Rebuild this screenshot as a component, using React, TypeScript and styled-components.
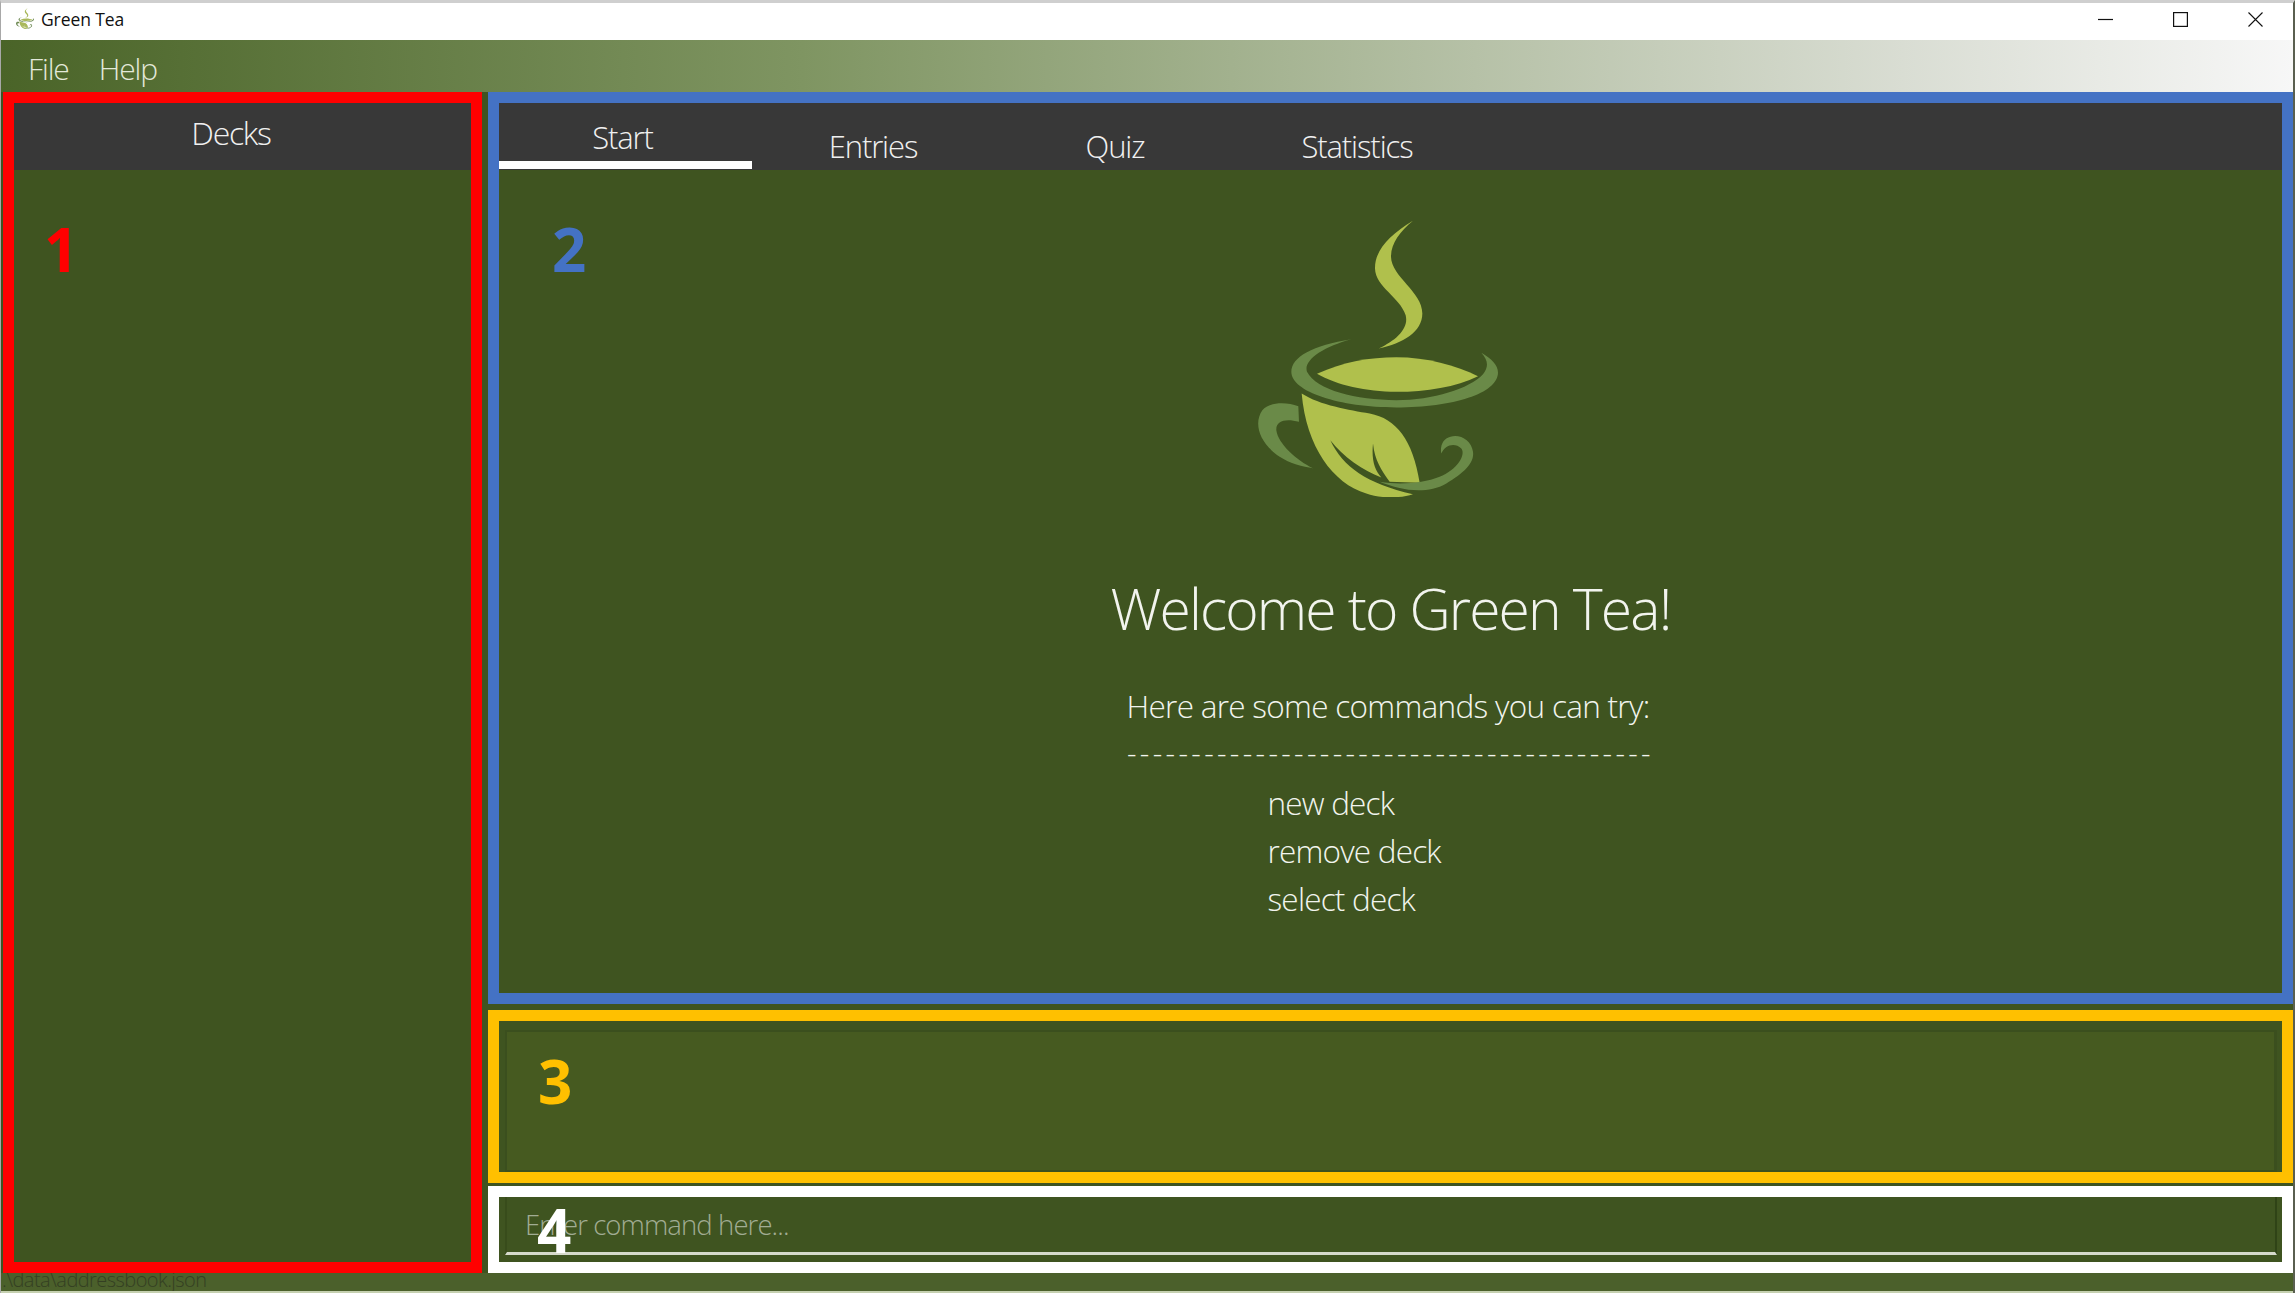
import React from "react";
import styled, { createGlobalStyle } from "styled-components";

const Global = createGlobalStyle`
  html, body { margin: 0; padding: 0; background: #3f5420; }
  * { box-sizing: border-box; }
`;
const LIGHT = `"Open Sans", "Noto Sans", sans-serif`;

const Win = styled.div`
  width: 2295px; height: 1293px; display: flex; flex-direction: column;
  background: #3f5420; overflow: hidden;
  border-top: 3px solid #cfcfcf; border-left: 1px solid #a8a8a8; border-right: 2px solid #5a5f50;
  font-family: ${LIGHT}; font-weight: 300;
`;
const TitleBar = styled.div`
  height: 37px; flex: none; background: #fff; display: flex; align-items: center; padding: 0 0 6px 15px;
`;
const TitleIcon = styled.svg`width: 18px; height: 21px; flex: none;`;
const TitleText = styled.span`
  margin-left: 7px; font-size: 17.5px; font-weight: 400; color: #111; letter-spacing: -0.1px;
`;
const WinButtons = styled.div`margin-left: auto; display: flex;`;
const WinButton = styled.div`width: 75px; height: 31px; display: flex; align-items: center; justify-content: center; padding-top: 1px;`;
const MenuBar = styled.div`
  height: 52px; flex: none; display: flex; align-items: center; padding: 5px 0 0 27px; gap: 30px;
  background: linear-gradient(90deg, #4a6428 0%, #7f9562 35%, #d9ddd3 83%, #f7f7f7 100%);
`;
const MenuItem = styled.span`font-size: 30px; color: #e3e8da; letter-spacing: -1.1px; font-weight: 300;`;
const Main = styled.div`
  flex: none; height: 1181px; display: flex; gap: 6px; padding-left: 2px;
`;
const Panel = styled.section<{ $c: string }>`
  position: relative; border: 11px solid ${(p) => p.$c}; display: flex; flex-direction: column; min-height: 0;
`;
const DeckPanel = styled(Panel)`width: 479px; flex: none;`;
const RightCol = styled.div`flex: 1; min-width: 0; display: flex; flex-direction: column;`;
const StartPanel = styled(Panel)`height: 912px; flex: none; margin-bottom: 6px;`;
const ResultPanel = styled(Panel)`height: 173px; flex: none; margin-bottom: 3px; padding: 9px 5px 0 6px;`;
const CommandPanel = styled(Panel)`height: 87px; flex: none; padding: 0 5px 0 6px;`;
const Header = styled.div`
  height: 67px; flex: none; background: #383838; color: #f0f0f0;
  display: flex; align-items: center; justify-content: center;
  font-size: 32px; letter-spacing: -1.3px; padding: 0 23px 8px 0;
`;
const TabBar = styled.div`height: 67px; flex: none; background: #383838; display: flex;`;
const Tab = styled.div<{ $active?: boolean; $w: number }>`
  width: ${(p) => p.$w}px; height: ${(p) => (p.$active ? "66px" : "67px")}; color: #f0f0f0; font-size: 31px; letter-spacing: -1.1px;
  display: flex; align-items: center; justify-content: center;
  padding: ${(p) => (p.$active ? "10px 6px 0 0" : "18px 0 0")};
  border-bottom: ${(p) => (p.$active ? "8px solid #fff" : "0")};
`;
const StartBody = styled.div`
  flex: 1; display: flex; flex-direction: column; align-items: center; padding-top: 50px; color: #f2f4ee;
`;
const Logo = styled.svg`width: 240px; height: 277px; flex: none; margin-left: -26px;`;
const Welcome = styled.h1`
  margin: 74px 0 0; font-size: 57px; line-height: 74px; font-weight: 300; letter-spacing: -1.85px; white-space: nowrap;
`;
const Try = styled.div`margin: 41px 5px 0 0; font-size: 31.5px; line-height: 40px; letter-spacing: -0.7px; white-space: nowrap;`;
const Dashes = styled.div`margin-top: 7px; font-size: 29.5px; line-height: 40px; letter-spacing: 3.36px; white-space: nowrap;`;
const Commands = styled.ul`
  list-style: none; margin: 6px 0 0; padding: 0; width: 246px; font-size: 31.5px; line-height: 48px; letter-spacing: -0.8px; white-space: nowrap;
`;
const ResultBox = styled.div`
  flex: 1; background: #465a20; border: solid #3b4f1e; border-width: 2px 3px 2px 2px;
`;
const CommandField = styled.div`
  height: 58px; display: flex; align-items: center; padding-left: 18px; margin-bottom: 7px;
  font-size: 27.5px; letter-spacing: -0.9px; color: #a1ac93;
  border-bottom: 3px solid #d6dacb; border-right: 2px solid #2f4316; border-left: 2px solid #384c1b;
`;
const Mark = styled.span<{ $c: string; $x: number; $y: number }>`
  position: absolute; left: ${(p) => p.$x}px; top: ${(p) => p.$y}px;
  color: ${(p) => p.$c}; font: 700 60px/60px "Open Sans", sans-serif;
`;
const Status = styled.div`
  height: 18px; flex: none; background: #4b602b; color: #343f22; font-size: 20px; line-height: 14px; letter-spacing: -0.55px; padding-left: 1px; white-space: nowrap;
`;
const Strip = styled.div`height: 2px; flex: none; background: #c5d0b0;`;

const CupArt = ({ leaf, rim }: { leaf: string; rim: string }) => (
  <>
    <path fill={leaf} d="M640 62C570 105 525 150 526 205C527 260 600 290 618 345C628 385 590 420 537 445C610 430 668 395 668 340C668 275 575 230 574 170C574 130 600 95 640 62Z" />
    <path fill={leaf} d="M352 521C430 485 510 471 590 471C680 471 770 495 835 528C770 560 680 575 590 575C500 575 410 555 352 521Z" />
    <path fill={rim} d="M455 417C340 435 275 470 275 515C275 575 420 622 590 622C760 622 895 580 895 517C895 495 875 475 845 458C865 480 868 500 850 522C810 565 700 600 590 600C470 600 350 570 322 515C310 480 370 440 455 417Z" />
    <path fill={leaf} d="M306 580C360 615 450 630 510 640C590 655 640 720 660 848L570 845C545 810 525 780 520 730C515 780 525 810 545 832C490 810 430 770 392 720C430 800 500 850 640 882C600 895 540 895 500 880C400 850 320 740 306 580Z" />
    <path fill={rim} d="M296 618C260 605 210 605 188 630C160 670 180 730 240 770C270 790 310 800 340 804C290 780 235 730 230 690C228 660 260 655 298 665Z" />
    <path fill={rim} d="M540 845C600 870 680 885 740 850C790 820 825 790 820 755C815 715 770 695 740 715C725 725 722 745 725 760C735 735 765 725 785 745C800 765 770 810 720 830C670 850 600 855 540 845Z" />
  </>
);

export default function App() {
  return (
    <>
      <Global />
      <Win>
        <TitleBar>
          <TitleIcon viewBox="175 60 720 830" preserveAspectRatio="xMidYMid meet"><CupArt leaf="#a9b85a" rim="#6f8a55" /></TitleIcon>
          <TitleText>Green Tea</TitleText>
          <WinButtons>
            <WinButton><svg width="15" height="15" viewBox="0 0 15 15"><path d="M0 7.5H15" stroke="#111" strokeWidth="1.2" /></svg></WinButton>
            <WinButton><svg width="15" height="15" viewBox="0 0 15 15"><rect x=".6" y=".6" width="13.8" height="13.8" fill="none" stroke="#111" strokeWidth="1.2" /></svg></WinButton>
            <WinButton><svg width="15" height="15" viewBox="0 0 15 15"><path d="M.5.5L14.5 14.5M14.5.5L.5 14.5" stroke="#111" strokeWidth="1.1" /></svg></WinButton>
          </WinButtons>
        </TitleBar>
        <MenuBar>
          <MenuItem>File</MenuItem>
          <MenuItem>Help</MenuItem>
        </MenuBar>
        <Main>
          <DeckPanel $c="#ff0000">
            <Header>Decks</Header>
            <Mark $c="#ff0000" $x={30} $y={116}>1</Mark>
          </DeckPanel>
          <RightCol>
            <StartPanel $c="#4472c4">
              <TabBar>
                <Tab $active $w={253}>Start</Tab>
                <Tab $w={242}>Entries</Tab>
                <Tab $w={242}>Quiz</Tab>
                <Tab $w={242}>Statistics</Tab>
              </TabBar>
              <StartBody>
                <Logo viewBox="175 60 720 830"><CupArt leaf="#b0c04c" rim="#6a8a48" /></Logo>
                <Welcome>Welcome to Green Tea!</Welcome>
                <Try>Here are some commands you can try:</Try>
                <Dashes>-----------------------------------------</Dashes>
                <Commands>
                  <li>new deck</li>
                  <li>remove deck</li>
                  <li>select deck</li>
                </Commands>
              </StartBody>
              <Mark $c="#4472c4" $x={53} $y={116}>2</Mark>
            </StartPanel>
            <ResultPanel $c="#ffc000">
              <ResultBox />
              <Mark $c="#ffc000" $x={39} $y={30}>3</Mark>
            </ResultPanel>
            <CommandPanel $c="#ffffff">
              <CommandField>Enter command here...</CommandField>
              <Mark $c="#ffffff" $x={38} $y={3}>4</Mark>
            </CommandPanel>
          </RightCol>
        </Main>
        <Status>.\data\addressbook.json</Status>
        <Strip />
      </Win>
    </>
  );
}
